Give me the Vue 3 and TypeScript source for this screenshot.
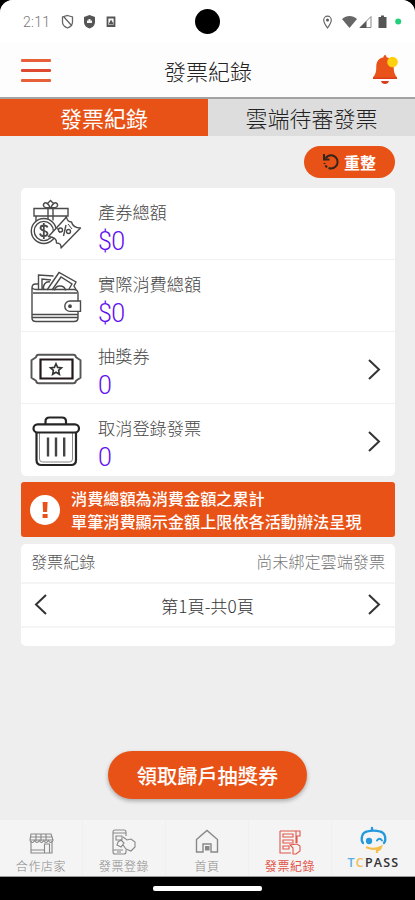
<script setup lang="ts">
interface Stat { icon: string; label: string; value: string; link: boolean }
interface NavItem { icon: string; label: string; active?: boolean }

const stats: Stat[] = [
  { icon: 'gift', label: '產券總額', value: '$0', link: false },
  { icon: 'wallet', label: '實際消費總額', value: '$0', link: false },
  { icon: 'ticket', label: '抽獎券', value: '0', link: true },
  { icon: 'trash', label: '取消登錄發票', value: '0', link: true },
]
const nav: NavItem[] = [
  { icon: 'store', label: '合作店家' },
  { icon: 'register', label: '發票登錄' },
  { icon: 'home', label: '首頁' },
  { icon: 'record', label: '發票紀錄', active: true },
]
</script>

<template>
  <div class="device">
    <div class="screen">
      <div class="status">
        <span class="time">2:11</span>
        <svg class="st-left" width="58" height="16" viewBox="0 0 58 16">
          <path d="M6.500 1.500 11.500 3v5c0 3-2.500 5-5 6-2.500-1-5-3-5-6V3zM3 3l8 9" fill="none" stroke="#666" stroke-width="1.300" />
          <path d="M28.500 1 34 3v5c0 3.500-2.500 5.500-5.500 6.500C25.500 13.500 23 11.500 23 8V3z" fill="#555" />
          <path d="M26 9V6.500h1.500V5h2v1.500H31V9z" fill="#f4f4f4" />
          <path d="M46.500 3.500h7v8.500h-7z" fill="#fff" stroke="#555" stroke-width="1.800" />
          <path d="m47.500 10.500 2.500-5 3 5z" fill="#555" />
        </svg>
        <span class="camera"></span>
        <svg class="st-right" width="86" height="16" viewBox="0 0 86 16">
          <path d="M7.500 14C5 10.500 3.700 8.500 3.700 6a3.800 3.800 0 0 1 7.600 0c0 2.500-1.300 4.500-3.800 8z" fill="none" stroke="#666" stroke-width="1.200" />
          <circle cx="7.500" cy="6" r="1.500" fill="#555" />
          <path d="M22 5c4.500-4 10.500-4 15 0l-7.500 9z" fill="#666" />
          <path d="M51 2.500V13.500H40z" fill="#fff" stroke="#888" />
          <path d="M46.500 7v7H39.500z" fill="#555" />
          <path d="M61 1.500h3V3h2.500v11h-8V3H61z" fill="#555" />
          <circle cx="78.200" cy="7.500" r="3" fill="#22d07b" />
        </svg>
      </div>

      <header class="header">
        <button class="menu" aria-label="選單"><i></i><i></i><i></i></button>
        <h1>發票紀錄</h1>
        <svg class="bell" width="28" height="32" viewBox="0 0 28 32">
          <path d="M14 1c1 0 1.400 1 1.500 2.200 4.500.8 7.200 4.300 7.200 8.800 0 6 .9 8.500 3.300 11.300V25H2v-1.700C4.500 20.500 5.300 18 5.300 12c0-4.500 2.700-8 7.200-8.800C12.600 2 13 1 14 1z" fill="#e9531a" />
          <path d="M2 23.500h24V25H2zM10 27h8c-.5 2-2 3-4 3s-3.500-1-4-3z" fill="#db3c1a" />
          <circle cx="21.500" cy="8" r="5.300" fill="#ffd00e" />
        </svg>
      </header>

      <nav class="tabs">
        <a class="tab on">發票紀錄</a>
        <a class="tab">雲端待審發票</a>
      </nav>

      <main class="main">
        <div class="tools">
          <button class="refresh">
            <svg width="18" height="18" viewBox="0 0 18 18" fill="none" stroke="#33241c" stroke-width="2">
              <path d="M3.500 5.500C5 3 7 2.300 9 2.300a6.600 6.600 0 0 1 0 13.200" />
              <path d="M9 15.500A6.600 6.600 0 0 1 2.500 10" stroke-dasharray="2.500 1.500" />
              <path d="M2 1v5.500h5.500" />
            </svg>
            <span>重整</span>
          </button>
        </div>

        <section class="card stats">
          <div v-for="s in stats" :key="s.label" class="stat">
            <svg v-if="s.icon === 'gift'" class="icon" width="52" height="52" viewBox="0 0 52 52" fill="none" stroke="#4a4a4a" stroke-width="1.400">
              <path d="M6 24V17H4V9.500h34v7.500h-2v5M18 9.500v14M23 9.500v12M4 17h33" />
              <path d="M20 8.500c-5 1-8-1-6-4 2-2 5 1 6 4zm1 0c5 1 8-1 6-4-2-2-5 1-6 4zM17.500 4.500l3-3 3 3" />
              <circle cx="13.800" cy="32" r="12.500" fill="#fff" />
              <circle cx="13.800" cy="32" r="9.600" />
              <path d="M17.500 28.500c-.5-2.500-7-3-7 .5 0 3.500 7 2 7 5.500 0 3.500-7 3.500-7.500 0M13.800 24v16" stroke-width="1.800" />
              <path d="M18.500 37.500 36.500 18c.5 3.500 2 5 5 5 1 4 4 6 9 6L31 49c.5-3-1-5-4.500-5 .5-4-3-6-8-6.500z" fill="#fff" stroke-linejoin="round" />
              <path d="m36 26-2.500 11" />
              <circle cx="30.500" cy="31" r="2" /><circle cx="38.500" cy="32.500" r="2" />
              <path d="m27 29 3 5M38 25l4 5" stroke-width="1" />
            </svg>
            <svg v-else-if="s.icon === 'wallet'" class="icon" width="52" height="52" viewBox="0 0 52 52" fill="none" stroke="#4a4a4a" stroke-width="1.400">
              <path d="M8.500 19V4l15 1M12 18V8l9 1M17 19 29 1.500l17 9.500-2 4 2 3.500M22 19l9-13 11 7-3 5M14 19c-2-5 2-9 6-8" />
              <path d="M24.500 19.500c1-6 10-6 11 0" />
              <path d="M8 13H5.500q-3.500 0-3.500 4M2 17v30q0 3.500 4 3.500h38q4 0 4-3.500V22.500q0-4-4-4H6q-3 0-4-2" />
              <path d="M3 22h44M2 43.500h46M2 46.500h46" />
              <path d="M50.500 30H40a5.200 5.200 0 0 0 0 10.400h10.500z" fill="#fff" /><circle cx="40" cy="35.200" r="1.200" fill="#333" />
            </svg>
            <svg v-else-if="s.icon === 'ticket'" class="icon" width="52" height="52" viewBox="0 0 52 52" fill="none" stroke="#555">
              <path d="M8.500 11.700h35q2 0 2.500 2.500l4.500 3v17.600l-4.500 3q-.5 2.500-2.500 2.500h-35q-2 0-2.500-2.500l-4.500-3V17.200l4.500-3q.5-2.500 2.500-2.500z" stroke-width="1.900" stroke-linejoin="round" />
              <path d="M10.500 16.500h32v19h-32z" stroke="#24171a" stroke-width="2.200" />
              <path d="m26 20.800 1.600 3.600 3.900.4-2.900 2.600.8 3.900-3.400-2-3.400 2 .8-3.900-2.900-2.600 3.900-.4z" stroke="#333" stroke-width="1.600" />
            </svg>
            <svg v-else class="icon" width="52" height="52" viewBox="0 0 52 52" fill="none" stroke="#252525" stroke-width="2.200">
              <path d="M15.500 9V6.500q0-4 4-4h12.500q4 0 4 4V9" />
              <path d="M6.500 17v28q0 5 5 5h29.500q5 0 5-5V17" /><path d="M9.500 18v26q0 3 3 3h27q3 0 3-3V18" stroke="#888" stroke-width="1" />
              <rect x="3.500" y="9.300" width="45.500" height="8.200" rx="4.100" fill="#fff" />
              <path d="M18 22.500v19M26 22.500v19M34.200 22.500v19" stroke="#444" stroke-width="2.400" />
            </svg>
            <div class="copy">
              <div class="label">{{ s.label }}</div>
              <div class="value">{{ s.value }}</div>
            </div>
            <svg v-if="s.link" class="chev" width="14" height="22" viewBox="0 0 14 22"><path d="m2 2 10 9.500L2 21" /></svg>
          </div>
        </section>

        <section class="notice">
          <svg width="30" height="30" viewBox="0 0 30 30">
            <circle cx="15" cy="15" r="15" fill="#fff" />
            <path d="M12.600 7h5l-.5 10h-4zM12.600 19h5v4h-5z" fill="#e8511a" />
          </svg>
          <p>消費總額為消費金額之累計<br />單筆消費顯示金額上限依各活動辦法呈現</p>
        </section>

        <section class="card records">
          <div class="rec-head"><span>發票紀錄</span><span class="muted">尚未綁定雲端發票</span></div>
          <div class="pager">
            <svg class="chev" width="14" height="22" viewBox="0 0 14 22"><path d="M12 1 2 10.500 12 20" /></svg>
            <span>第1頁-共0頁</span>
            <svg class="chev" width="14" height="22" viewBox="0 0 14 22"><path d="m2 1 10 9.500L2 20" /></svg>
          </div>
          <div class="rest"></div>
        </section>

        <button class="claim">領取歸戶抽獎券</button>
      </main>

      <nav class="bottom">
        <a v-for="n in nav" :key="n.icon" class="item" :class="{ active: n.active }">
          <svg width="28" height="28" viewBox="0 0 28 28" fill="none" stroke="currentColor" stroke-width="1.100">
            <template v-if="n.icon === 'store'">
              <path d="M4 6h20l2 6H3zM4 13v12h21V13M3 9h22M9 6v7M14 6v7M19 6v7M17.500 25v-9h5v9M4 22h13" />
              <path d="M3 12.500q2.300 4 4.600 0 2.300 4 4.600 0 2.300 4 4.600 0 2.300 4 4.600 0 2.300 4 4.600 0" />
            </template>
            <template v-else-if="n.icon === 'register'">
              <path d="M16 8V4q0-2-2-2H5Q3 2 3 4v20q0 2 2 2h9q2 0 2-2v-2M3 5h13M3 22h10M6 8h6v4H6zM7 24h4" />
              <path d="m13 9 4 3 4-1 4 3v5l-4 4-5-2-3-4M8 14l3-2 3 3-3 4-4-2z" />
            </template>
            <template v-else-if="n.icon === 'home'">
              <path d="M3.500 11.500 14 2.500l10.500 9V24H18v-8h-8v8H3.500z" stroke-width="1.400" />
              <path d="M12.500 18.500h3.500V22h-3.500z" fill="currentColor" />
            </template>
            <template v-else>
              <path d="M4 3h20v5h-3v7M4 3v22h11M7 6h10v3H7zM7 12h10v3H7zM7 18h6v3H7zM20 3v12M21 8h3" />
              <path d="M17 26v-6l-3-3 7-1 3 2v5l-4 3z" />
            </template>
          </svg>
          <span>{{ n.label }}</span>
        </a>
        <a class="item pass">
          <svg width="30" height="28" viewBox="0 0 30 28" fill="none" stroke="#2499dc" stroke-width="2.300" stroke-linecap="round">
            <path d="M4 18C1.500 15 2.500 7.500 8 6.500c4-1 9-1 13 0 5.500 1 6.500 8.500 4 11.500M13 5.500V3" />
            <circle cx="10" cy="16" r="2" fill="#2499dc" /><path d="M18 15.500q2.500-3.500 5 0" stroke-width="1.900" />
            <path d="M8 22.500q7 3 14-.5-1 3-4 3.500v1.500" stroke="#f6bd48" />
          </svg>
          <span class="brand"><b class="t">T</b><b class="c">C</b><b>PASS</b></span>
        </a>
      </nav>
    </div>
    <div class="gesture"><i></i></div>
  </div>
</template>

<style>
body { margin: 0; background: #000; }
</style>

<style scoped>
* { box-sizing: border-box; }
.device { width: 415px; height: 900px; display: flex; flex-direction: column; background: #000; font-family: "Noto Sans CJK TC", sans-serif; font-weight: 300; color: #333; overflow: hidden; }
.screen { height: 877px; display: flex; flex-direction: column; background: #eee; border-radius: 13px 13px 0 0; overflow: hidden; }
button { border: 0; font-family: inherit; }
svg { display: block; flex: none; }
.status { height: 42px; flex: none; background: #fff; display: grid; grid-template-columns: 38px 58px 1fr 86px; align-items: center; padding: 1px 9px 0 23px; }
.time { font: 300 14px Roboto, sans-serif; letter-spacing: .3px; color: #777; white-space: nowrap; }
.camera { width: 25px; height: 25px; border-radius: 50%; background: #000; margin-left: 76px; }
.header { height: 57px; flex: none; background: #fdfdfd; border-bottom: 2px solid #a3a3a3; display: grid; grid-template-columns: 30px 1fr 30px; align-items: center; padding: 0 16px 0 21px; }
.menu { background: none; padding: 0; margin-top: 2px; width: 30px; height: 23px; display: flex; flex-direction: column; justify-content: space-between; }
.menu i { height: 3px; width: 30px; background: #e75f38; border-radius: 1px; }
.menu i:nth-child(2) { background: #dd4831; }
h1 { margin: 0 4px 0 0; text-align: center; font-size: 22px; font-weight: 300; line-height: 32px; color: #222; }
.bell { margin: 1px 0 0 2px; }
.tabs { height: 37px; flex: none; display: grid; grid-template-columns: 208px 1fr; }
.tab { background: #ddd; color: #222; font-size: 22px; line-height: 36px; text-align: center; }
.tab.on { background: #e95216; color: #fff; font-weight: 400; }
.main { flex: 1; display: flex; flex-direction: column; padding: 0 20px 0 21px; }
.tools { height: 52px; flex: none; display: flex; justify-content: flex-end; align-items: center; }
.refresh { width: 91px; height: 32px; border-radius: 16px; background: #e95216; display: flex; align-items: center; padding: 0 0 0 18px; gap: 4px; color: #fff; font-size: 16px; font-weight: 700; }
.card { background: #fff; border-radius: 5px; flex: none; }
.stats { height: 288px; }
.stat { height: 72px; display: flex; align-items: center; padding: 2px 14px 0 9px; box-shadow: inset 0 -1px #f1f1f1; }
.stat:last-child { box-shadow: none; }
.copy { margin-left: 16px; flex: 1; padding-top: 8px; }
.label { font-size: 17.200px; line-height: 26px; color: #444; white-space: nowrap; }
.value { font: 300 25px/34px Roboto, sans-serif; letter-spacing: -.6px; color: #6210f0; }
.chev { fill: none; stroke: #333; stroke-width: 2; }
.notice { margin-top: 6px; height: 55px; flex: none; border-radius: 3px; background: #e95216; color: #fff; display: flex; align-items: center; gap: 11px; padding-left: 9px; }
.notice p { margin: 0; font-size: 16.150px; line-height: 23px; font-weight: 500; white-space: nowrap; }
.records { margin-top: 7px; }
.rec-head { height: 40px; display: flex; justify-content: space-between; padding: 0 10px; font-size: 16.100px; line-height: 34px; border-bottom: 2px solid #f5f5f5; color: #555; }
.muted { color: #777; }
.pager { height: 44px; display: flex; justify-content: space-between; align-items: center; padding: 0 14px 0 13px; font-size: 17.200px; border-bottom: 2px solid #f5f5f5; }
.pager span { padding-top: 1px; }
.rest { height: 18px; }
.claim { width: 199px; height: 48px; flex: none; margin: 105px auto 0 87px; border-radius: 24px; background: #e95216; color: #fff; font-size: 20.200px; font-weight: 500; padding: 0; box-shadow: 0 2px 4px rgba(0, 0, 0, .3); }
.bottom { height: 57px; flex: none; background: #f4f4f4; display: grid; grid-template-columns: repeat(5, 1fr); border-bottom: 1px solid #999; }
.item { display: flex; flex-direction: column; align-items: center; padding-top: 8px; color: #888; font-size: 12px; line-height: 19px; letter-spacing: .6px; border-right: 1px solid #f0f0f0; white-space: nowrap; }
.item.active { color: #e2564b; font-weight: 400; }
.pass { padding-top: 5px; border: 0; }
.brand { font: 700 12.500px/20px "Open Sans", sans-serif; letter-spacing: 1.200px; color: #333; }
.brand b { font-weight: 600; }
.brand .t { color: #58aee6; }
.brand .c { color: #f3bd58; }
.gesture { height: 23px; display: flex; justify-content: center; padding-top: 9px; }
.gesture i { width: 109px; height: 5px; border-radius: 2px; background: #fff; }
</style>
